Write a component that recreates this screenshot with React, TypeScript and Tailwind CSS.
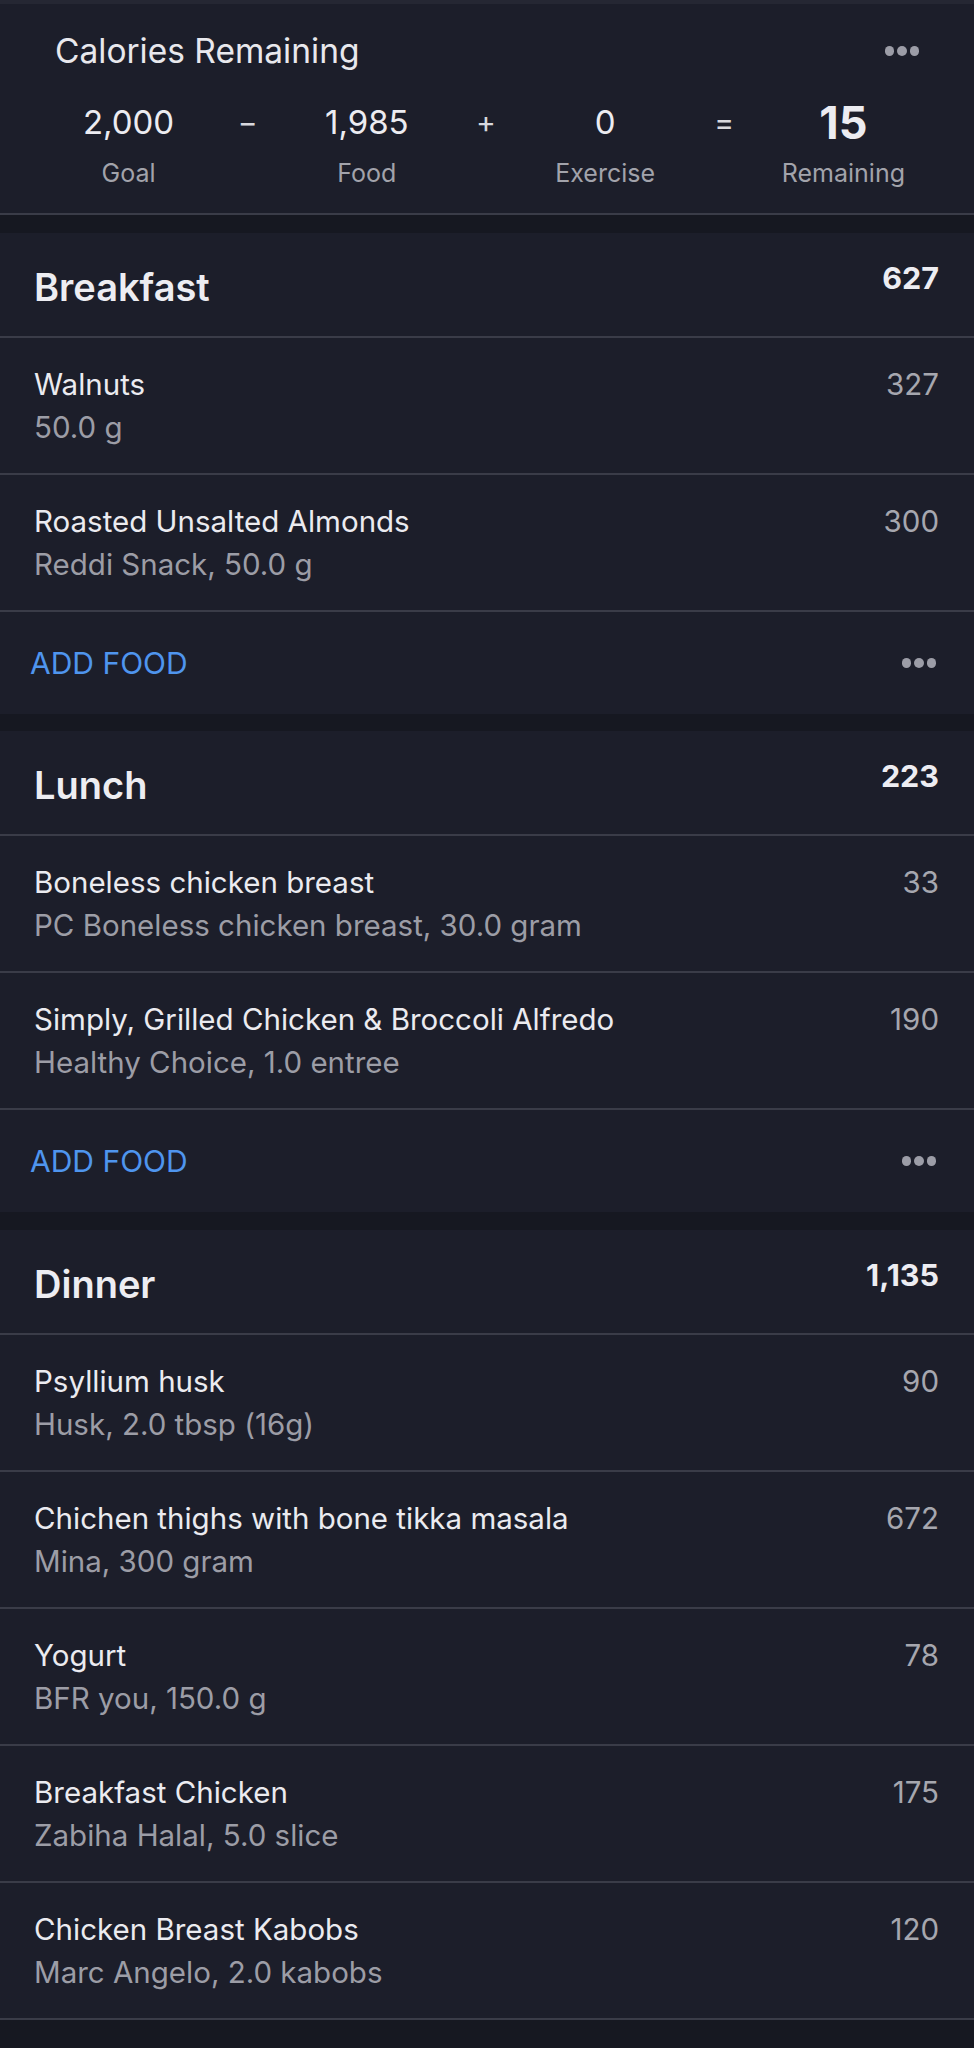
import React from 'react';

type Food = { name: string; detail: string; cal: string };
type Meal = { title: string; total: string; foods: Food[]; addRow: boolean; gap: string };

const meals: Meal[] = [
  {
    title: 'Breakfast',
    total: '627',
    addRow: true,
    gap: 'mt-[18px]',
    foods: [
      { name: 'Walnuts', detail: '50.0 g', cal: '327' },
      { name: 'Roasted Unsalted Almonds', detail: 'Reddi Snack, 50.0 g', cal: '300' },
    ],
  },
  {
    title: 'Lunch',
    total: '223',
    addRow: true,
    gap: 'mt-[17px]',
    foods: [
      { name: 'Boneless chicken breast', detail: 'PC Boneless chicken breast, 30.0 gram', cal: '33' },
      { name: 'Simply, Grilled Chicken & Broccoli Alfredo', detail: 'Healthy Choice, 1.0 entree', cal: '190' },
    ],
  },
  {
    title: 'Dinner',
    total: '1,135',
    addRow: false,
    gap: 'mt-[18px]',
    foods: [
      { name: 'Psyllium husk', detail: 'Husk, 2.0 tbsp (16g)', cal: '90' },
      { name: 'Chichen thighs with bone tikka masala', detail: 'Mina, 300 gram', cal: '672' },
      { name: 'Yogurt', detail: 'BFR you, 150.0 g', cal: '78' },
      { name: 'Breakfast Chicken', detail: 'Zabiha Halal, 5.0 slice', cal: '175' },
      { name: 'Chicken Breast Kabobs', detail: 'Marc Angelo, 2.0 kabobs', cal: '120' },
    ],
  },
];

const Dots = () => (
  <div className="flex items-center gap-[3px]">
    <span className="w-[9.5px] h-[9.5px] rounded-full bg-[#9c9da7]" />
    <span className="w-[9.5px] h-[9.5px] rounded-full bg-[#9c9da7]" />
    <span className="w-[9.5px] h-[9.5px] rounded-full bg-[#9c9da7]" />
  </div>
);

const Stat = ({ value, label, strong }: { value: string; label: string; strong?: boolean }) => (
  <div className="flex flex-col items-center">
    <div
      className={`h-[40px] flex items-center leading-none text-[#ececf1] ${
        strong ? 'text-[45px] font-bold' : 'text-[33px]'
      }`}
    >
      {value}
    </div>
    <div className="mt-[17px] text-[25px] leading-[28px] text-[#a2a3ab]">{label}</div>
  </div>
);

const Op = ({ sign }: { sign: string }) => (
  <div className="flex flex-col items-center">
    <div className="h-[40px] flex items-center text-[30px] leading-none text-[#d8d8de]">{sign}</div>
  </div>
);

export default function App() {
  return (
    <div className="min-h-screen w-full bg-[#161821] font-['Inter',sans-serif]">
      {/* Calories summary */}
      <div className="bg-[#1c1e2a] border-t-[4px] border-t-[#252733] border-b-2 border-b-[#3a3c48]">
        <div className="flex items-center justify-between pl-[55px] pr-[55px] pt-[27px]">
          <span className="text-[33.5px] leading-[40px] text-[#e8e8ed]">Calories Remaining</span>
          <Dots />
        </div>
        <div className="grid grid-cols-7 ml-[69px] mr-[71px] mt-[31px] pb-[26px]">
          <Stat value="2,000" label="Goal" />
          <Op sign="−" />
          <Stat value="1,985" label="Food" />
          <Op sign="+" />
          <Stat value="0" label="Exercise" />
          <Op sign="=" />
          <Stat value="15" label="Remaining" strong />
        </div>
      </div>

      {meals.map((meal) => (
        <div key={meal.title} className={`${meal.gap} bg-[#1c1e2a]`}>
          {/* Meal header */}
          <div className="h-[105px] flex items-start justify-between pl-[34px] pr-[35px] pt-[27px] border-b-2 border-b-[#3a3c48]">
            <span className="mt-[5px] text-[38px] leading-[44px] font-semibold text-[#ededf2]">{meal.title}</span>
            <span className="text-[30.5px] leading-[36px] font-bold text-[#ededf2]">{meal.total}</span>
          </div>

          {meal.foods.map((f) => (
            <div
              key={f.name}
              className="h-[137px] flex items-start justify-between pl-[34px] pr-[35px] pt-[28px] border-b-2 border-b-[#3a3c48]"
            >
              <div className="flex flex-col gap-[7px]">
                <span className="text-[29.5px] leading-[36px] text-[#ebebf0]">{f.name}</span>
                <span className="text-[29.5px] leading-[36px] text-[#9c9da6]">{f.detail}</span>
              </div>
              <span className="text-[29.5px] leading-[36px] text-[#a6a7af]">{f.cal}</span>
            </div>
          ))}

          {meal.addRow && (
            <div className="h-[102px] flex items-center justify-between pl-[30px] pr-[38px]">
              <span className="text-[30px] leading-[36px] text-[#4f95ee]">ADD FOOD</span>
              <Dots />
            </div>
          )}
        </div>
      ))}
    </div>
  );
}
